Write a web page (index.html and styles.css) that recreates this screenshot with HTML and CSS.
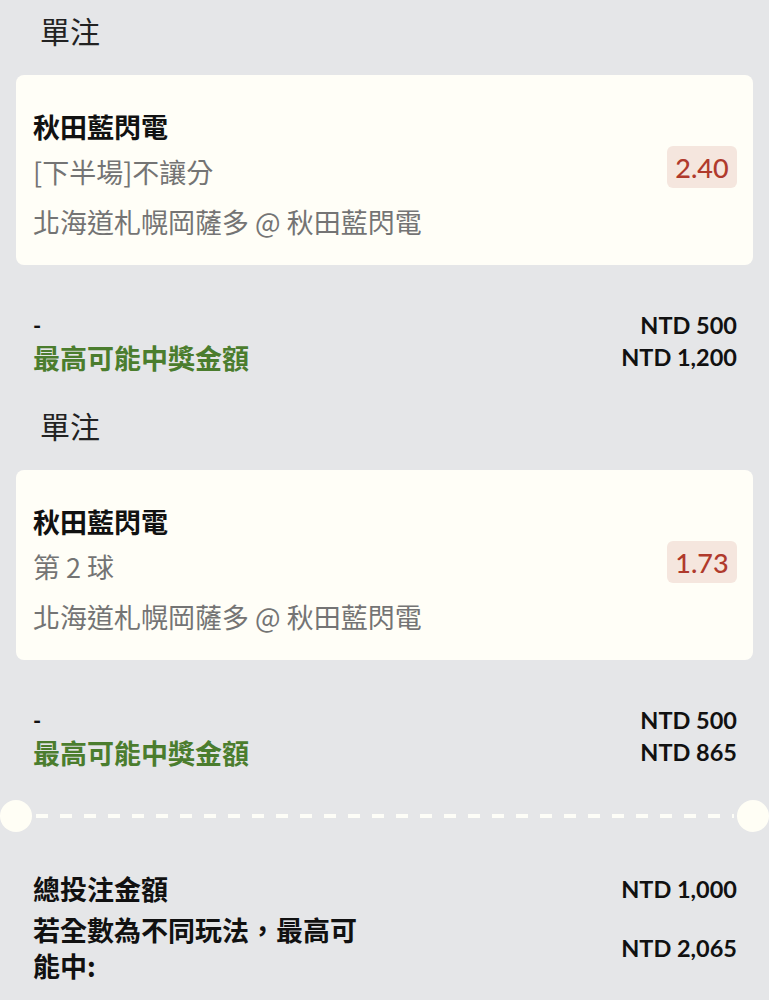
FILE: index.html
```html
<!DOCTYPE html>
<html lang="zh-Hant">
<head>
<meta charset="utf-8">
<title>單注</title>
<link rel="stylesheet" href="styles.css">
</head>
<body>
<div class="page">
  <section class="bet">
    <div class="bet-title">單注</div>
    <div class="card">
      <div class="card-info">
        <div class="team">秋田藍閃電</div>
        <div class="market">[下半場]不讓分</div>
        <div class="match">北海道札幌岡薩多 @ 秋田藍閃電</div>
      </div>
      <div class="odds">2.40</div>
    </div>
    <div class="stake">
      <div class="row"><span class="dash">-</span><span class="amount">NTD 500</span></div>
      <div class="row"><span class="win-label">最高可能中獎金額</span><span class="amount">NTD 1,200</span></div>
    </div>
  </section>

  <section class="bet">
    <div class="bet-title">單注</div>
    <div class="card">
      <div class="card-info">
        <div class="team">秋田藍閃電</div>
        <div class="market">第 2 球</div>
        <div class="match">北海道札幌岡薩多 @ 秋田藍閃電</div>
      </div>
      <div class="odds">1.73</div>
    </div>
    <div class="stake">
      <div class="row"><span class="dash">-</span><span class="amount">NTD 500</span></div>
      <div class="row"><span class="win-label">最高可能中獎金額</span><span class="amount">NTD 865</span></div>
    </div>
  </section>

  <div class="divider">
    <span class="notch"></span>
    <span class="dashline"></span>
    <span class="notch"></span>
  </div>

  <div class="summary">
    <div class="sum-row">
      <span class="sum-label">總投注金額</span>
      <span class="amount">NTD 1,000</span>
    </div>
    <div class="sum-row">
      <span class="sum-label">若全數為不同玩法，最高可能中:</span>
      <span class="amount">NTD 2,065</span>
    </div>
  </div>
</div>
</body>
</html>
```

FILE: styles.css
```css
* { box-sizing: border-box; }

html, body {
  margin: 0;
  padding: 0;
  background: #e5e6e8;
}

body {
  font-family: "Noto Sans CJK TC", "Noto Sans", sans-serif;
  color: #1a1a1a;
}

.page {
  width: 769px;
}

.bet-title {
  height: 60px;
  line-height: 60px;
  padding-left: 40px;
  font-size: 30px;
  font-weight: 400;
  color: #222;
}

.card {
  margin: 15px 16px 0;
  height: 190px;
  padding: 32px 16px 18px 17px;
  background: #fffef7;
  border-radius: 8px;
  display: flex;
  justify-content: space-between;
  align-items: center;
}

.card-info {
  align-self: flex-start;
}

.team {
  font-size: 27px;
  font-weight: 700;
  line-height: 40px;
  color: #111;
}

.market,
.match {
  font-size: 27px;
  font-weight: 400;
  line-height: 50px;
  color: #747474;
}

.odds {
  width: 70px;
  height: 42px;
  margin-bottom: 20px;
  border-radius: 6px;
  background: #f5e6de;
  color: #b03a2c;
  font-family: Lato, "Liberation Sans", sans-serif;
  font-size: 27px;
  font-weight: 500;
  display: flex;
  align-items: center;
  justify-content: center;
}

.stake {
  margin-top: 44px;
  padding: 0 32px 0 33px;
  margin-bottom: 22px;
}

.row {
  height: 32px;
  display: flex;
  justify-content: space-between;
  align-items: center;
}

.dash {
  font-family: Lato, sans-serif;
  font-weight: 700;
  font-size: 22px;
  color: #111;
}

.win-label {
  font-size: 27px;
  font-weight: 700;
  color: #4b7d2e;
}

.amount {
  font-family: Lato, "Liberation Sans", sans-serif;
  font-weight: 700;
  font-size: 23.5px;
  color: #111;
}

.divider {
  margin-top: 32px;
  height: 32px;
  display: flex;
  align-items: center;
}

.notch {
  width: 32px;
  height: 32px;
  border-radius: 50%;
  background: #fffef5;
  flex: none;
}

.dashline {
  flex: 1;
  height: 4px;
  margin: 0 3px 0 4px;
  background: repeating-linear-gradient(90deg, #fdfdf7 0 12px, transparent 12px 24px);
}

.summary {
  margin-top: 39px;
  padding: 0 32px 0 33px;
  display: flex;
  flex-direction: column;
  gap: 5px;
}

.sum-row {
  display: flex;
  justify-content: space-between;
  align-items: center;
}

.sum-label {
  width: 345px;
  font-size: 27px;
  font-weight: 700;
  line-height: 36px;
  color: #111;
}
```
